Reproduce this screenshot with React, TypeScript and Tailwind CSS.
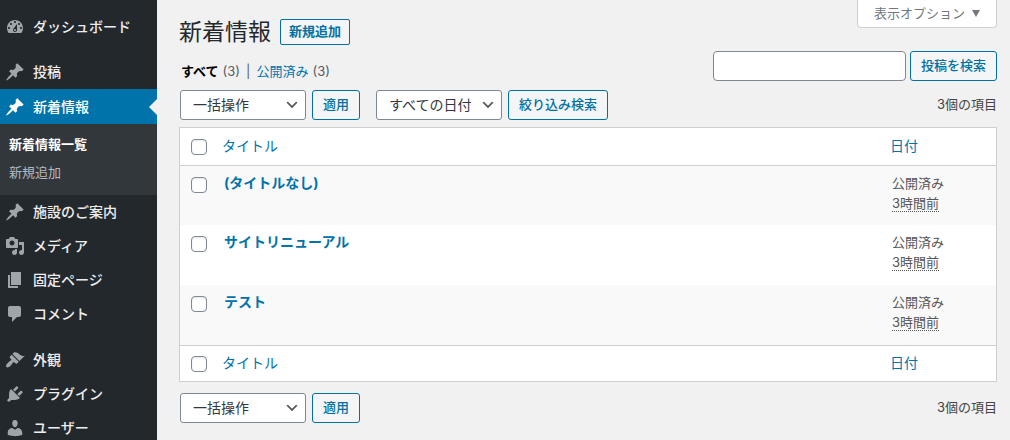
import { useState } from "react";

const icons = {
  dashboard:
    "M3.76 16h12.48c1.1-1.37 1.76-3.11 1.76-5 0-4.42-3.58-8-8-8s-8 3.58-8 8c0 1.89.66 3.63 1.76 5zM10 4c.55 0 1 .45 1 1s-.45 1-1 1-1-.45-1-1 .45-1 1-1zM6 6c.55 0 1 .45 1 1s-.45 1-1 1-1-.45-1-1 .45-1 1-1zm8 0c.55 0 1 .45 1 1s-.45 1-1 1-1-.45-1-1 .45-1 1-1zm-5.37 5.55L12 7v6c0 1.1-.9 2-2 2s-2-.9-2-2c0-.57.24-1.08.63-1.45zM4 10c.55 0 1 .45 1 1s-.45 1-1 1-1-.45-1-1 .45-1 1-1zm12 0c.55 0 1 .45 1 1s-.45 1-1 1-1-.45-1-1 .45-1 1-1zm-5 3c0-.55-.45-1-1-1s-1 .45-1 1 .45 1 1 1 1-.45 1-1z",
  pin: "M10.44 3.02l1.82-1.82 6.36 6.35-1.83 1.82c-1.05-.68-2.48-.57-3.41.36l-.75.75c-.92.93-1.04 2.35-.35 3.41l-1.83 1.82-2.41-2.41-2.8 2.79c-.42.42-3.38 2.71-3.8 2.29s1.86-3.39 2.28-3.81l2.79-2.79L4.1 9.36l1.83-1.82c1.05.69 2.48.57 3.4-.36l.75-.75c.93-.92 1.05-2.35.36-3.41z",
  media:
    "M13 11V4c0-.55-.45-1-1-1h-1.67L9 1H5L3.67 3H2c-.55 0-1 .45-1 1v7c0 .55.45 1 1 1h10c.55 0 1-.45 1-1zM7 4.5c1.38 0 2.5 1.12 2.5 2.5S8.38 9.5 7 9.5 4.5 8.38 4.5 7 5.62 4.5 7 4.5zM14 6h5v10.5c0 1.38-1.12 2.5-2.5 2.5S14 17.88 14 16.5s1.12-2.5 2.5-2.5c.17 0 .34.02.5.05V9h-3V6zm-4 8.05V13h2v3.5c0 1.38-1.12 2.5-2.5 2.5S7 17.88 7 16.5 8.12 14 9.5 14c.17 0 .34.02.5.05z",
  page: "M6 15V2h10v13H6zm-1 1h8v2H3V5h2v11z",
  comment:
    "M5 2h9c1.1 0 2 .9 2 2v7c0 1.1-.9 2-2 2h-2l-5 5v-5H5c-1.1 0-2-.9-2-2V4c0-1.1.9-2 2-2z",
  appearance:
    "M14.48 11.06L7.41 3.99l1.5-1.5c.5-.56 2.3-.47 3.51.32 1.21.8 1.43 1.28 2.91 2.1 1.18.64 2.45 1.26 4.45.85zm-.71.71L6.7 4.7 4.93 6.47c-.39.39-.39 1.02 0 1.41l1.06 1.06c.39.39.39 1.03 0 1.42-.6.6-1.43 1.11-2.21 1.69-.35.26-.7.53-1.01.84C1.43 14.23.4 16.08 1.4 17.07c.99 1 2.84-.03 4.18-1.36.31-.31.58-.66.85-1.02.57-.78 1.08-1.61 1.69-2.21.39-.39 1.02-.39 1.41 0l1.06 1.06c.39.39 1.02.39 1.41 0z",
  plugin:
    "M13.11 4.36L9.87 7.6 8 5.73l3.24-3.24c.35-.34 1.05-.2 1.56.32.52.51.66 1.21.31 1.55zm-8 1.77l.91-1.12 9.01 9.01-1.19.84c-.71.71-2.63 1.16-3.82 1.16H6.14L4.9 17.26c-.59.59-1.54.59-2.12 0-.59-.58-.59-1.53 0-2.12l1.24-1.24v-3.88c0-1.13.4-3.19 1.09-3.89zm7.26 3.97l3.24-3.24c.34-.35 1.04-.21 1.55.31.52.51.66 1.21.31 1.55l-3.24 3.25z",
  user: "M10 9.25c-2.27 0-2.73-3.44-2.73-3.44C7 4.02 7.82 2 9.97 2c2.16 0 2.98 2.02 2.71 3.81 0 0-.41 3.44-2.68 3.44zm0 2.57L12.72 10c2.39 0 4.52 2.33 4.52 4.53v2.49s-3.65 1.13-7.24 1.13c-3.65 0-7.24-1.13-7.24-1.13v-2.49c0-2.25 1.94-4.48 4.47-4.48z",
};

type IconName = keyof typeof icons;

function MenuItem({ icon, label, current = false }: { icon: IconName; label: string; current?: boolean }) {
  return (
    <a
      href="#"
      aria-current={current ? "page" : undefined}
      className={
        current
          ? "relative flex h-[35px] items-center gap-2 bg-[#0073aa] pl-[5px] text-white"
          : "flex h-[34px] items-center gap-2 pl-[5px] text-[#eeeeee]"
      }
    >
      <svg
        viewBox="0 0 20 20"
        aria-hidden="true"
        className={current ? "size-5 shrink-0 fill-white" : "size-5 shrink-0 fill-[#a0a5aa]"}
      >
        <path d={icons[icon]} />
      </svg>
      <span className="text-sm font-medium whitespace-nowrap">{label}</span>
      {current && (
        <span className="absolute top-1/2 right-0 -translate-y-1/2 border-8 border-l-0 border-transparent border-r-[#f1f1f1]" />
      )}
    </a>
  );
}

function Sidebar() {
  return (
    <nav aria-label="メインメニュー" className="w-[157px] shrink-0 overflow-hidden bg-[#23282d] pt-[10px]">
      <MenuItem icon="dashboard" label="ダッシュボード" />
      <div className="h-[11px]" />
      <MenuItem icon="pin" label="投稿" />
      <MenuItem icon="pin" label="新着情報" current />
      <div className="flex flex-col gap-2 bg-[#32373c] px-[9px] pt-[10px] pb-[13px] text-[13px] leading-5">
        <a href="#" className="font-bold text-white">
          新着情報一覧
        </a>
        <a href="#" className="text-[#b4b9be]">
          新規追加
        </a>
      </div>
      <MenuItem icon="pin" label="施設のご案内" />
      <MenuItem icon="media" label="メディア" />
      <MenuItem icon="page" label="固定ページ" />
      <MenuItem icon="comment" label="コメント" />
      <div className="h-3" />
      <MenuItem icon="appearance" label="外観" />
      <MenuItem icon="plugin" label="プラグイン" />
      <MenuItem icon="user" label="ユーザー" />
    </nav>
  );
}

function Button({ children, type = "button" }: { children: string; type?: "button" | "submit" }) {
  return (
    <button
      type={type}
      className="h-[30px] shrink-0 rounded-[3px] border border-[#0071a1] bg-[#f3f5f6] px-[10px] text-[13px] font-medium whitespace-nowrap text-[#0071a1]"
    >
      {children}
    </button>
  );
}

function Select({ label, options }: { label: string; options: string[] }) {
  return (
    <div className="relative">
      <select
        aria-label={label}
        className="block h-[30px] appearance-none rounded-[3px] border border-[#7e8993] bg-white w-[126px] pr-6 pl-3 text-sm text-[#32373c]"
      >
        {options.map((o) => (
          <option key={o}>{o}</option>
        ))}
      </select>
      <svg
        viewBox="0 0 20 20"
        aria-hidden="true"
        className="pointer-events-none absolute top-[7px] right-[6px] size-4 fill-[#555555]"
      >
        <path d="M5 6l5 5 5-5 2 1-7 7-7-7 2-1z" />
      </svg>
    </div>
  );
}

function BulkActions({ id }: { id: string }) {
  return (
    <div className="flex gap-[6px]">
      <Select label={"一括操作 " + id} options={["一括操作", "編集", "ゴミ箱へ移動"]} />
      <Button>適用</Button>
    </div>
  );
}

function Checkbox({ label, checked, onChange }: { label: string; checked: boolean; onChange: () => void }) {
  return (
    <input
      type="checkbox"
      aria-label={label}
      checked={checked}
      onChange={onChange}
      className="block size-4 appearance-none rounded-[4px] border border-[#7e8993] bg-white shadow-[inset_0_1px_2px_rgba(0,0,0,0.1)] checked:bg-[#0071a1]"
    />
  );
}

const posts = ["(タイトルなし)", "サイトリニューアル", "テスト"];

function PostTable() {
  const [selected, setSelected] = useState<string[]>([]);
  const all = selected.length === posts.length;
  const toggleAll = () => setSelected(all ? [] : posts);
  const toggle = (p: string) => setSelected((s) => (s.includes(p) ? s.filter((x) => x !== p) : [...s, p]));

  const headings = (
    <>
      <td className="pt-[2px] pl-[11px]">
        <Checkbox label="すべて選択" checked={all} onChange={toggleAll} />
      </td>
      <th scope="col" className="pl-2 text-left font-normal">
        <a href="#" className="text-sm text-[#0073aa]">
          タイトル
        </a>
      </th>
      <th scope="col" className="pl-2 text-left font-normal">
        <a href="#" className="text-sm text-[#0073aa]">
          日付
        </a>
      </th>
    </>
  );

  return (
    <div className="mt-[7px] border border-[#ccd0d4] bg-white">
      <table className="w-full table-fixed border-collapse">
        <colgroup>
          <col className="w-[34px]" />
          <col />
          <col className="w-[114px]" />
        </colgroup>
        <thead>
          <tr className="h-[37px] border-b border-[#ccd0d4]">{headings}</tr>
        </thead>
        <tbody>
          {posts.map((p) => (
            <tr key={p} className="h-[60px] align-top odd:bg-[#f9f9f9]">
              <td className="pt-[11px] pl-[11px]">
                <Checkbox label={p + "を選択"} checked={selected.includes(p)} onChange={() => toggle(p)} />
              </td>
              <td className="pt-[7px] pl-[10px] text-sm font-bold">
                <a href="#" className="text-[#0073aa]">
                  {p}
                </a>
              </td>
              <td className="pt-[7px] pl-[10px] text-[13px] leading-5 text-[#555555]">
                公開済み
                <br />
                <span className="border-b border-dotted border-[#555555] leading-none">3時間前</span>
              </td>
            </tr>
          ))}
        </tbody>
        <tfoot>
          <tr className="h-9 border-t border-[#ccd0d4]">{headings}</tr>
        </tfoot>
      </table>
    </div>
  );
}

export default function App() {
  return (
    <div
      lang="ja"
      className="flex h-screen overflow-hidden bg-[#f1f1f1] font-['Inter','Noto_Sans_CJK_JP',sans-serif] text-[13px] text-[#444444]"
    >
      <Sidebar />
      <main className="min-w-0 flex-1 pr-[13px] pl-[22px]">
        <header className="flex h-[51px] items-start justify-between">
          <div className="flex items-center gap-[9px] pt-[15px]">
            <h1 className="text-[23px] leading-[34px] text-[#23282d]">新着情報</h1>
            <a
              href="#"
              className="flex h-[26px] items-center rounded-[2px] border border-[#0071a1] bg-[#f3f5f6] px-2 font-bold text-[#0071a1]"
            >
              新規追加
            </a>
          </div>
          <button
            type="button"
            className="flex h-7 items-center gap-[7px] rounded-b-[4px] border border-t-0 border-[#ccd0d4] bg-white px-4 text-[13px] text-[#72777c]"
          >
            表示オプション
            <svg viewBox="0 0 8 7" aria-hidden="true" className="h-[7px] w-2 fill-current">
              <path d="M0 0h8L4 7z" />
            </svg>
          </button>
        </header>

        <div className="flex h-[30px] items-center justify-between">
          <ul className="flex gap-[6px] pt-3 pl-[2px] text-[#555d66]">
            <li className="flex gap-1">
              <a href="#" className="font-bold text-black">
                すべて
              </a>
              (3)
            </li>
            <li aria-hidden="true">|</li>
            <li className="flex gap-1">
              <a href="#" className="text-[#0073aa]">
                公開済み
              </a>
              (3)
            </li>
          </ul>
          <form className="flex gap-1" onSubmit={(e) => e.preventDefault()}>
            <input
              type="search"
              aria-label="投稿を検索"
              className="h-[30px] w-[193px] rounded-[4px] border border-[#7e8993] bg-white px-2 text-sm"
            />
            <Button type="submit">投稿を検索</Button>
          </form>
        </div>

        <div className="mt-[9px] flex items-center justify-between pl-px">
          <div className="flex gap-4">
            <BulkActions id="上" />
            <div className="flex gap-[6px]">
              <Select label="日付で絞り込む" options={["すべての日付"]} />
              <Button>絞り込み検索</Button>
            </div>
          </div>
          <span>3個の項目</span>
        </div>

        <PostTable />

        <div className="mt-[11px] flex items-center justify-between pl-px">
          <BulkActions id="下" />
          <span>3個の項目</span>
        </div>
      </main>
    </div>
  );
}
